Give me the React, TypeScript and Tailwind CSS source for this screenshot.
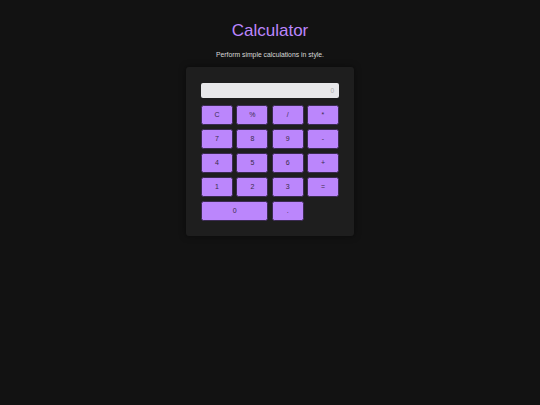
import React from "react";

const keys: { label: string; wide?: boolean }[] = [
  { label: "C" },
  { label: "%" },
  { label: "/" },
  { label: "*" },
  { label: "7" },
  { label: "8" },
  { label: "9" },
  { label: "-" },
  { label: "4" },
  { label: "5" },
  { label: "6" },
  { label: "+" },
  { label: "1" },
  { label: "2" },
  { label: "3" },
  { label: "=" },
  { label: "0", wide: true },
  { label: "." },
];

export default function App() {
  return (
    <div
      className="min-h-[405px] w-full bg-[#121212] flex flex-col items-center"
      style={{ fontFamily: '"Liberation Sans", Arial, sans-serif' }}
    >
      <h1 className="mt-[21px] text-[17px] leading-[20px] text-[#bb86fc]">Calculator</h1>
      <p className="mt-[10px] text-[6.8px] leading-[8px] text-[#d8d8d8]">
        Perform simple calculations in style.
      </p>
      <div className="mt-[8px] w-[168px] rounded-[3px] bg-[#1e1e1e] px-[15px] pt-[16px] pb-[15px] shadow-[0_0_6px_rgba(0,0,0,0.5)]">
        <div className="h-[15px] w-full rounded-[2px] bg-[#e8e8ea] flex items-center justify-end pr-[5px]">
          <span className="text-[6.5px] text-[#b0b0b0]">0</span>
        </div>
        <div className="mt-[7px] grid grid-cols-4 gap-x-[3.3px] gap-y-[3.7px]">
          {keys.map((k) => (
            <button
              key={k.label}
              className={`h-[20.3px] rounded-[2.5px] border border-[#3b2a52] bg-[#bb86fc] text-[7px] text-[#3a2c4a] flex items-center justify-center ${
                k.wide ? "col-span-2" : ""
              }`}
            >
              {k.label}
            </button>
          ))}
        </div>
      </div>
    </div>
  );
}
